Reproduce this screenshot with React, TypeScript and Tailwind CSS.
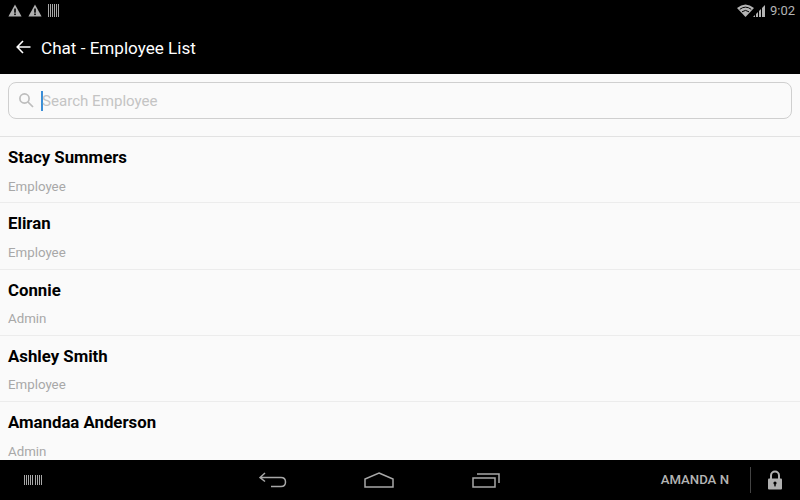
const people = [
  { name: "Stacy Summers", role: "Employee" },
  { name: "Eliran", role: "Employee" },
  { name: "Connie", role: "Admin" },
  { name: "Ashley Smith", role: "Employee" },
  { name: "Amandaa Anderson", role: "Admin" },
];

function Warn() {
  return (
    <svg width="14" height="13" viewBox="0 0 14 13">
      <path d="M7 0.5 L13.6 12.5 L0.4 12.5 Z" fill="#b0b0b0" />
      <rect x="6.2" y="4.5" width="1.6" height="4.2" fill="#000" />
      <rect x="6.2" y="9.5" width="1.6" height="1.6" fill="#000" />
    </svg>
  );
}

function Barcode({ w, h, bars, color }: { w: number; h: number; bars: number[]; color: string }) {
  return (
    <svg width={w} height={h} viewBox={`0 0 ${w} ${h}`}>
      {bars.map((b, i) => (
        <rect key={i} x={b} y="0" width="1" height={h} fill={color} />
      ))}
    </svg>
  );
}

export default function App() {
  return (
    <div className="w-[800px] h-[500px] flex flex-col overflow-hidden bg-[#fafafa] font-['Roboto',sans-serif]">
      <div className="h-[74px] bg-black flex flex-col shrink-0">
        <div className="h-[20px] flex items-center justify-between pl-2 pr-[5px]">
          <div className="flex items-center gap-[6px]">
            <Warn />
            <Warn />
            <Barcode w={11} h={13} bars={[0, 2, 4, 6, 8, 10]} color="#a8a8a8" />
          </div>
          <div className="flex items-center">
            <svg width="17" height="13" viewBox="0 0 17 13">
              <path d="M0 4 Q8.5 -3 17 4 L8.5 13 Z" fill="#b4b4b4" />
              <path d="M2.8 5.3 Q8.5 1 14.2 5.3" fill="none" stroke="#000" strokeWidth="1" />
              <path d="M5 7.8 Q8.5 5 12 7.8" fill="none" stroke="#000" strokeWidth="1" />
            </svg>
            <svg width="13" height="13" viewBox="0 0 13 13" className="ml-[-1px]">
              <path d="M0 13 L2 11 L2 13 Z" fill="#b4b4b4" />
              <path d="M3 10 L5 8 L5 13 L3 13 Z" fill="#b4b4b4" />
              <path d="M6 7 L8 5 L8 13 L6 13 Z" fill="#b4b4b4" />
              <path d="M9 4 L12 1 L12 13 L9 13 Z" fill="#b4b4b4" />
            </svg>
            <span className="ml-[4px] text-[13px] leading-none text-[#b4b4b4]">9:02</span>
          </div>
        </div>
        <div className="flex-1 flex items-center pl-[16px]">
          <svg width="15" height="14" viewBox="0 0 15 14" fill="none" stroke="#fff" strokeWidth="1.6" className="mb-[1px]">
            <path d="M14.5 7 H1.5 M7 1 L1.2 7 L7 13" />
          </svg>
          <span className="ml-[10px] pt-[3px] text-[17.1px] text-white">Chat - Employee List</span>
        </div>
      </div>

      <div className="h-[63px] shrink-0 px-2 pt-2 border-b border-[#e2e2e2]">
        <div className="h-[37px] rounded-lg border border-[#cfcfcf] flex items-center pl-[9px]">
          <svg width="16" height="16" viewBox="0 0 16 16" fill="none" stroke="#bdbdbd" strokeWidth="1.7" className="mb-[2px]">
            <circle cx="6.5" cy="6.5" r="4.6" />
            <path d="M10 10 L15 15" />
          </svg>
          <div className="ml-[7px] w-[2px] h-[20px] bg-[#3b8ed8]" />
          <span className="ml-[-1px] pt-[1px] text-[15.1px] text-[#c4c4c4]">Search Employee</span>
        </div>
      </div>

      <div className="flex-1 min-h-0 overflow-hidden">
        {people.map((p) => (
          <div key={p.name} className="h-[66.25px] border-b border-[#ececec] pl-2 pt-[10px]">
            <div className="text-[16.8px] leading-[20px] font-bold text-black">{p.name}</div>
            <div className="mt-[9.5px] text-[13.3px] leading-[20px] text-[#a8a8a8]">{p.role}</div>
          </div>
        ))}
      </div>

      <div className="h-[40px] shrink-0 bg-black flex items-center relative">
        <div className="ml-[24px] w-[20px] flex">
          <Barcode w={20} h={10} bars={[0, 2, 4, 6, 8, 11, 13, 15, 17]} color="#a8a8a8" />
        </div>
        <div className="ml-[215px] flex items-center">
          <svg width="28" height="16" viewBox="0 0 28 16" fill="none" stroke="#a8a8a8" strokeWidth="1.5">
            <path d="M6 1 L1 5.5 L6 9.5 M1 5.5 H22 Q26.5 5.5 26.5 10 Q26.5 14.5 22 14.5 H12" />
          </svg>
          <svg width="30" height="16" viewBox="0 0 30 16" fill="none" stroke="#a8a8a8" strokeWidth="1.5" className="ml-[77px]">
            <path d="M15 1 L29 7 V15 H1 V7 Z" />
          </svg>
          <svg width="28" height="16" viewBox="0 0 28 16" fill="none" stroke="#a8a8a8" strokeWidth="1.5" className="ml-[78px]">
            <rect x="1" y="6" width="22" height="9" />
            <path d="M5 2 H27 V11" />
          </svg>
        </div>
        <span className="ml-auto text-[13.2px] font-medium text-[#b4b4b4]">AMANDA N</span>
        <div className="ml-[21px] w-px h-[26px] bg-[#444]" />
        <svg width="16" height="20" viewBox="0 0 16 20" className="ml-[16px] mr-[17px]">
          <path d="M4 9 V5.5 A4 4 0 0 1 12 5.5 V9" fill="none" stroke="#b0b0b0" strokeWidth="2" />
          <rect x="1" y="8.5" width="14" height="11" rx="1" fill="#b0b0b0" />
          <circle cx="8" cy="13" r="1.6" fill="#000" />
          <rect x="7.3" y="13" width="1.4" height="3.4" fill="#000" />
        </svg>
      </div>
    </div>
  );
}
